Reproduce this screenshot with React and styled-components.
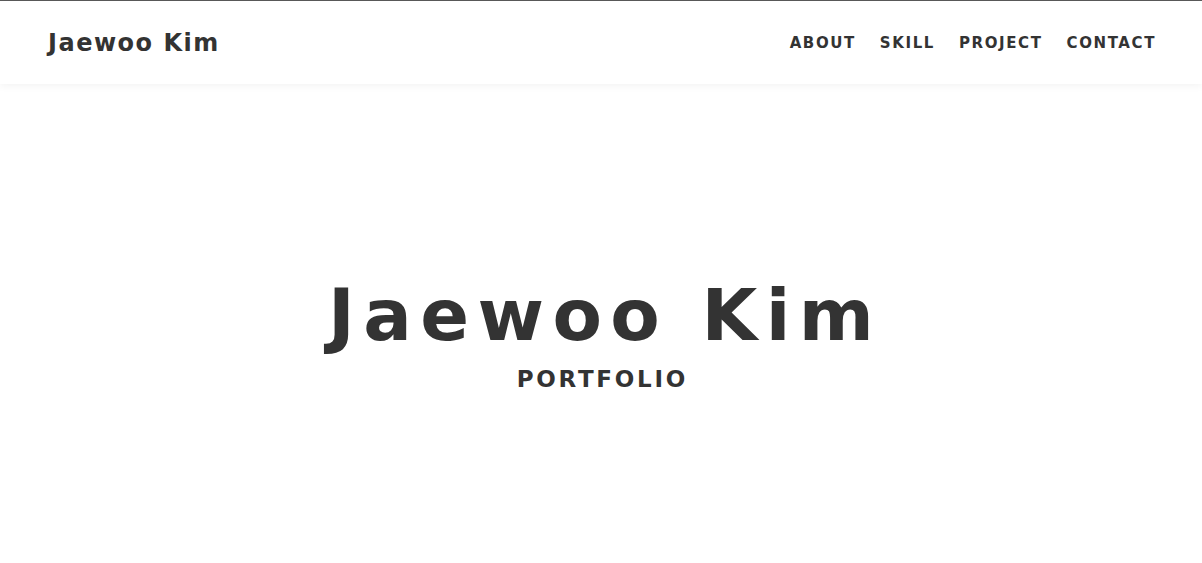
import React from "react"
import styled, { createGlobalStyle } from "styled-components"

const GlobalStyle = createGlobalStyle`
  html, body {
    margin: 0;
    padding: 0;
    background: #fff;
  }
  body {
    font-family: "DejaVu Sans", "Liberation Sans", sans-serif;
    color: #333;
  }
`

const Page = styled.div`
  display: flex;
  flex-direction: column;
  min-height: 563px;
  border-top: 1px solid #5a5a5a;
  box-sizing: border-box;
`

const Header = styled.header`
  display: flex;
  align-items: center;
  justify-content: space-between;
  height: 83px;
  padding: 0 46px 0 48px;
  background: #fff;
  box-shadow: 0 2px 8px rgba(0, 0, 0, 0.05);
  position: relative;
  z-index: 1;
`

const Logo = styled.a`
  font-size: 24px;
  font-weight: 700;
  letter-spacing: 1.5px;
  color: #333;
  text-decoration: none;
`

const Nav = styled.nav`
  display: flex;
  gap: 24px;
`

const NavLink = styled.a`
  font-size: 15px;
  font-weight: 700;
  letter-spacing: 1.6px;
  color: #333;
  text-decoration: none;
`

const Hero = styled.section`
  flex: 1;
  display: flex;
  flex-direction: column;
  align-items: center;
  justify-content: center;
  padding-top: 22px;
`

const Title = styled.h1`
  margin: 0;
  font-size: 72px;
  font-weight: 700;
  letter-spacing: 8.4px;
  line-height: 1;
  color: #333;
  padding-left: 8.4px;
`

const Subtitle = styled.h2`
  margin: 17px 0 0;
  font-size: 23px;
  font-weight: 700;
  letter-spacing: 2.7px;
  line-height: 1;
  color: #333;
  padding-left: 2.7px;
`

export default function App() {
  return (
    <>
      <GlobalStyle />
      <Page>
        <Header>
          <Logo href="#">Jaewoo Kim</Logo>
          <Nav>
            <NavLink href="#">ABOUT</NavLink>
            <NavLink href="#">SKILL</NavLink>
            <NavLink href="#">PROJECT</NavLink>
            <NavLink href="#">CONTACT</NavLink>
          </Nav>
        </Header>
        <Hero>
          <Title>Jaewoo Kim</Title>
          <Subtitle>PORTFOLIO</Subtitle>
        </Hero>
      </Page>
    </>
  )
}
